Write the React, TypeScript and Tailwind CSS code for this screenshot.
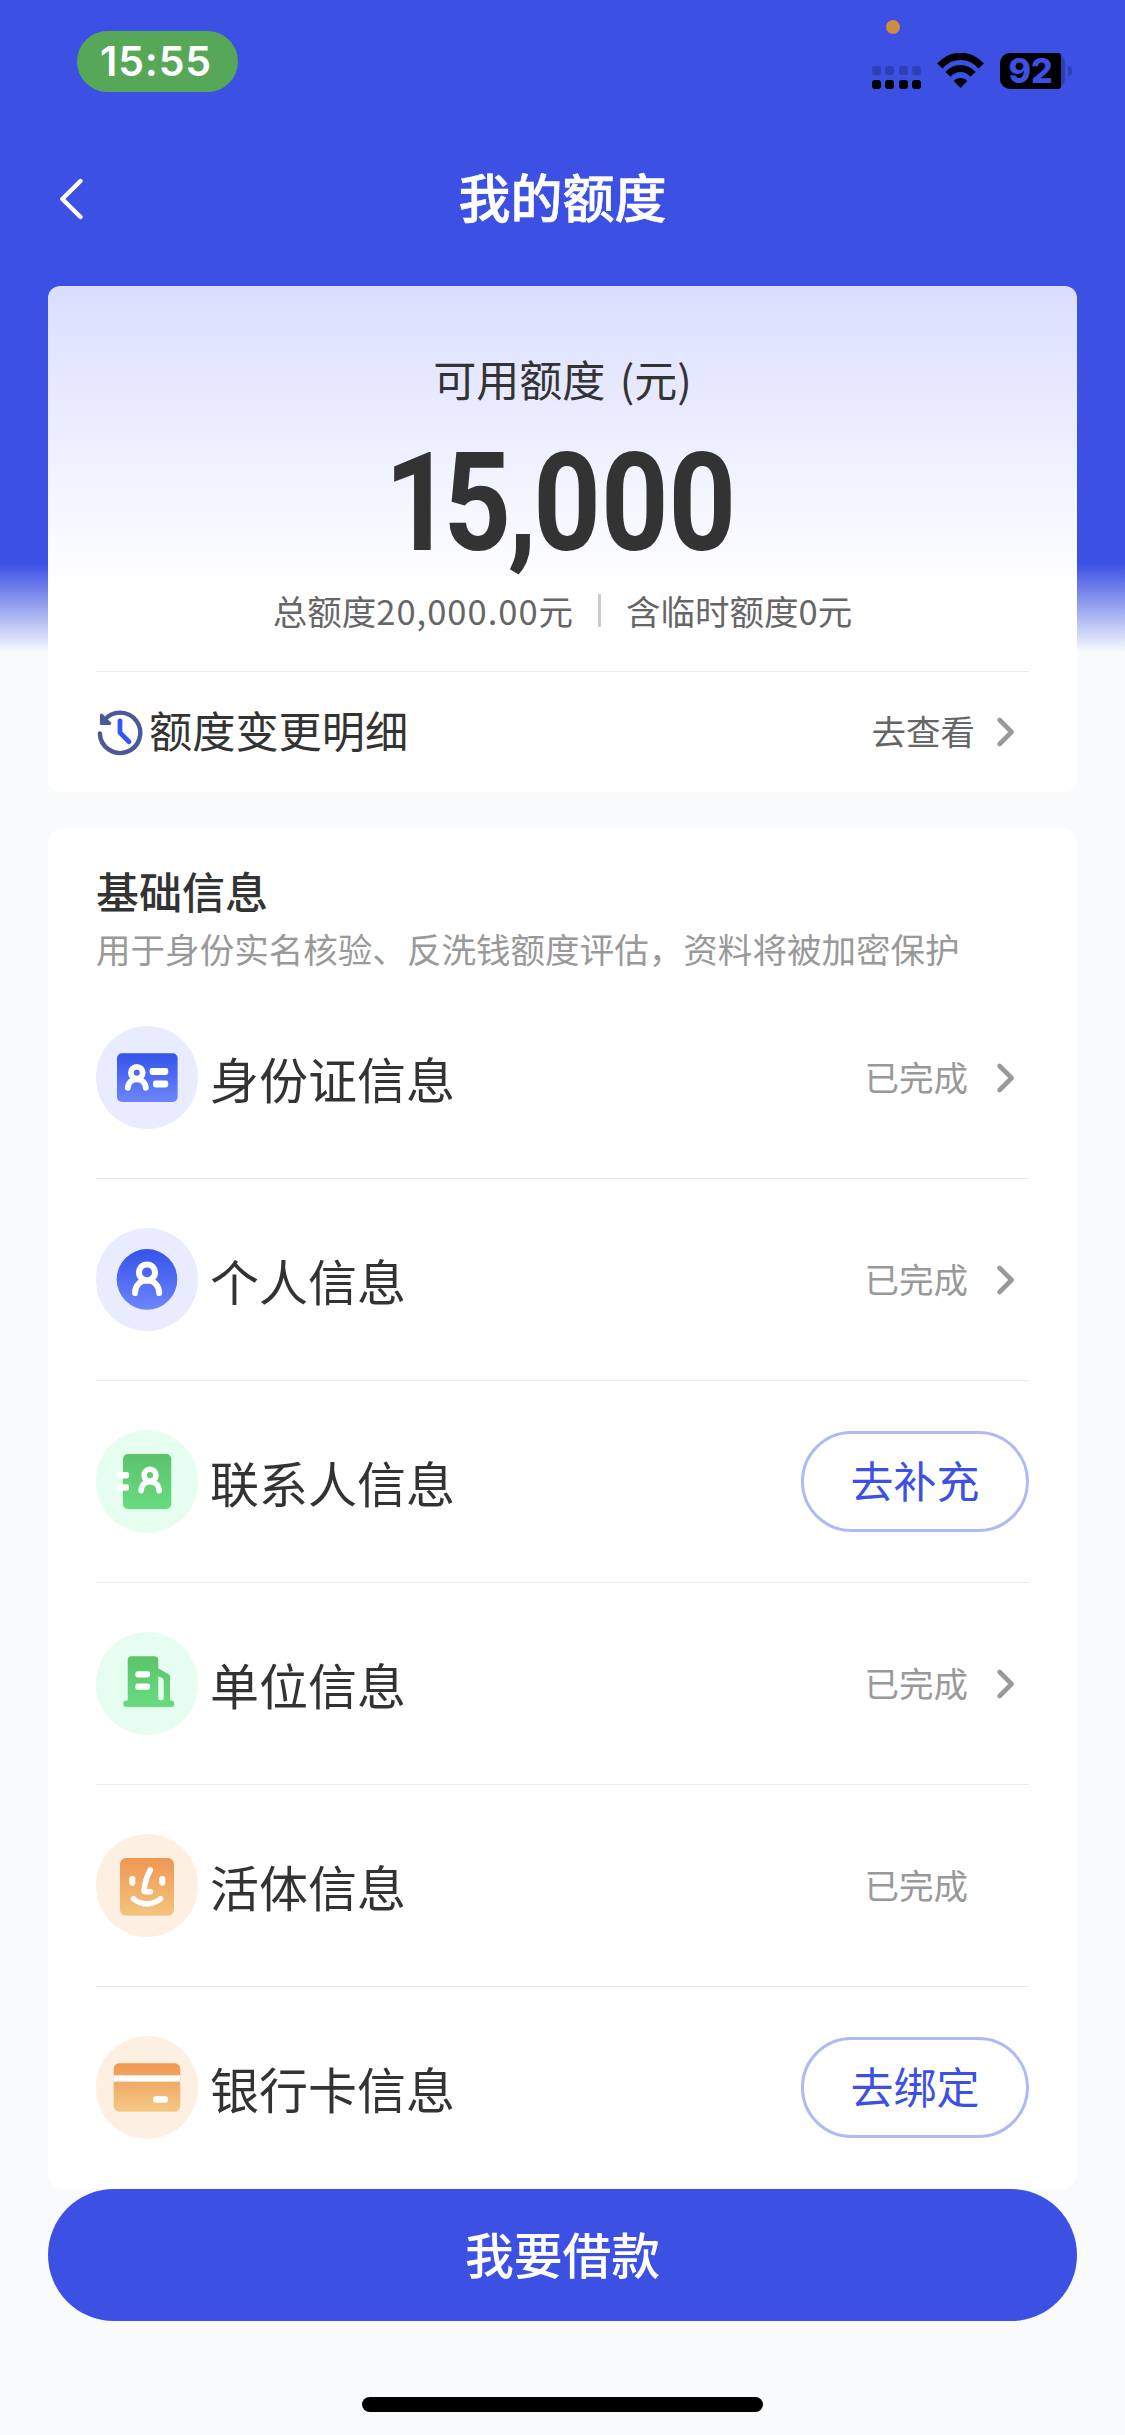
import React from 'react';

type RowAction = 'link' | 'none' | 'button';

interface InfoRow {
  label: string;
  status: string;
  action: RowAction;
  icon: React.FC;
}

const Gradient: React.FC<{ id: string; from: string; to: string }> = ({ id, from, to }) => (
  <linearGradient id={id} x1="0" y1="0" x2="0" y2="1">
    <stop offset="0" stopColor={from} />
    <stop offset="1" stopColor={to} />
  </linearGradient>
);

const IdCardIcon: React.FC = () => (
  <svg viewBox="0 0 102 103" className="size-full" fill="none">
    <defs>
      <Gradient id="idFill" from="#3453ea" to="#6e85fa" />
    </defs>
    <rect x="21" y="27.3" width="60.6" height="48.7" rx="5" fill="url(#idFill)" />
    <g stroke="#fff" strokeWidth="5.8" strokeLinecap="round">
      <circle cx="40.8" cy="46.8" r="5.9" />
      <path d="M31.8 61.8C32.2 56.5 35.8 53.4 40.8 53.4S49.4 56.5 49.8 61.8" />
    </g>
    <rect x="53.6" y="42.1" width="18.6" height="6.8" rx="2.4" fill="#fff" />
    <rect x="57" y="54.6" width="15.2" height="6.8" rx="2.4" fill="#fff" />
  </svg>
);

const PersonIcon: React.FC = () => (
  <svg viewBox="0 0 102 103" className="size-full" fill="none">
    <defs>
      <Gradient id="personFill" from="#3453ea" to="#6e85fa" />
    </defs>
    <circle cx="51" cy="51.4" r="30.3" fill="url(#personFill)" />
    <g stroke="#fff" strokeWidth="6" strokeLinecap="round">
      <circle cx="51" cy="44.4" r="8" />
      <path d="M39 65C39.4 57.2 44 52.6 51 52.6S62.8 57.2 63.2 65" />
    </g>
  </svg>
);

const ContactIcon: React.FC = () => (
  <svg viewBox="0 0 102 103" className="size-full" fill="none">
    <defs>
      <Gradient id="contactFill" from="#5bc36b" to="#67db80" />
    </defs>
    <rect x="27" y="24" width="48.3" height="55" rx="5" fill="url(#contactFill)" />
    <rect x="21" y="42" width="12" height="6.4" rx="2.2" fill="#fff" />
    <rect x="21" y="54.3" width="12" height="6.4" rx="2.2" fill="#fff" />
    <g stroke="#fff" strokeWidth="5.6" strokeLinecap="round">
      <circle cx="54" cy="45.2" r="5.9" />
      <path d="M45 60.8C45.4 55 49 51.8 54 51.8S62.8 55 63.2 60.8" />
    </g>
  </svg>
);

const BuildingIcon: React.FC = () => (
  <svg viewBox="0 0 102 103" className="size-full" fill="none">
    <defs>
      <Gradient id="buildingFill" from="#5bc36b" to="#67db80" />
    </defs>
    <path
      d="M31.7 28.3a4 4 0 0 1 4-4h22.6a4 4 0 0 1 4 4v8.3l10 5.4a3 3 0 0 1 1.7 2.6v23.9h1.1a3.2 3.2 0 0 1 0 6.4H30.5a3.2 3.2 0 0 1 0-6.4h1.2z"
      fill="url(#buildingFill)"
    />
    <path d="M62.3 44.4l3.8 1.7a2.6 2.6 0 0 1 1.6 2.4v17.8a2 2 0 0 1-2 2h-1.4a2 2 0 0 1-2-2z" fill="#e9fff1" />
    <rect x="39.3" y="39.3" width="14.8" height="6.2" rx="2.4" fill="#fff" />
    <rect x="39.3" y="51.6" width="14.8" height="6.2" rx="2.4" fill="#fff" />
  </svg>
);

const FaceIcon: React.FC = () => (
  <svg viewBox="0 0 102 103" className="size-full" fill="none">
    <defs>
      <Gradient id="faceFill" from="#ee9752" to="#f3c47e" />
    </defs>
    <rect x="24" y="24" width="54" height="57.8" rx="6" fill="url(#faceFill)" />
    <rect x="33.3" y="42" width="6" height="9.8" rx="2.8" fill="#fff" />
    <rect x="63.3" y="42" width="6" height="9.8" rx="2.8" fill="#fff" />
    <g stroke="#fff" strokeWidth="5.6" strokeLinecap="round" strokeLinejoin="round">
      <path d="M54.3 36C50.6 42.5 48.9 49 48 56.2q0 1.6 1.6 1.6h4.8" />
      <path d="M37.5 64.8C45 71.6 57 71.6 64.5 64.8" />
    </g>
  </svg>
);

const BankCardIcon: React.FC = () => (
  <svg viewBox="0 0 102 103" className="size-full" fill="none">
    <defs>
      <Gradient id="bankFill" from="#ee9752" to="#f5c985" />
    </defs>
    <rect x="17.7" y="27.3" width="66.6" height="48.4" rx="5.5" fill="url(#bankFill)" />
    <rect x="17.7" y="39.3" width="66.6" height="6.3" fill="#fff" />
    <rect x="57" y="60.2" width="15" height="6.6" rx="2.4" fill="#fff" />
  </svg>
);

const HistoryIcon: React.FC = () => (
  <svg viewBox="0 0 48 48" className="size-12 overflow-visible" fill="none" strokeLinecap="round" strokeLinejoin="round">
    <path d="M8 12.6A20.2 20.2 0 1 1 3.9 25.4" stroke="#4b5997" strokeWidth="4.4" />
    <path d="M5.6 7.4v8h8z" fill="#4b5997" stroke="#4b5997" strokeWidth="3.4" />
    <path d="M24 12.8v11.8l9 9.2" stroke="#3455f5" strokeWidth="4.8" />
  </svg>
);

const Chevron: React.FC = () => (
  <svg viewBox="0 0 20 32" className="h-8 w-5" fill="none">
    <path d="M3.6 4L15.6 16L3.6 28" stroke="#999" strokeWidth="4.6" strokeLinecap="round" strokeLinejoin="round" />
  </svg>
);

const rows: (InfoRow & { tint: string })[] = [
  { label: '身份证信息', status: '已完成', action: 'link', icon: IdCardIcon, tint: 'bg-[#e9ecfe]' },
  { label: '个人信息', status: '已完成', action: 'link', icon: PersonIcon, tint: 'bg-[#e9ecfe]' },
  { label: '联系人信息', status: '去补充', action: 'button', icon: ContactIcon, tint: 'bg-[#e6fef0]' },
  { label: '单位信息', status: '已完成', action: 'link', icon: BuildingIcon, tint: 'bg-[#e6fef0]' },
  { label: '活体信息', status: '已完成', action: 'none', icon: FaceIcon, tint: 'bg-[#fdf0e3]' },
  { label: '银行卡信息', status: '去绑定', action: 'button', icon: BankCardIcon, tint: 'bg-[#fdf0e3]' },
];

const StatusBar: React.FC = () => (
  <div className="flex h-[112px] items-start justify-between pl-[77px] pr-[53px]">
    <div className="mt-[31px] flex h-[61px] w-[161px] items-center justify-center rounded-full bg-[#57a759] pr-[3px] font-[Inter] text-[41px] font-semibold leading-none tracking-[0.8px] text-white">
      15:55
    </div>
    <div className="relative mt-[53px] flex h-9 items-start">
      {/* microphone-in-use dot */}
      <span className="absolute left-3.5 top-[-33px] size-3.5 rounded-full bg-[#cd8d43]"></span>
      <div className="mt-[13px] grid grid-cols-4 gap-x-[4.5px] gap-y-[5px]">
        {[0, 1, 2, 3, 4, 5, 6, 7].map((dot) => (
          <span key={dot} className={`h-[9px] w-[9px] rounded-[3px] ${dot < 4 ? 'bg-[#2f40b4]' : 'bg-black'}`}></span>
        ))}
      </div>
      <svg viewBox="0 0 47 36" className="ml-4 h-9 w-[47px]" fill="none">
        <path d="M2.8 13C14.5 0.2 32.5 0.2 44.2 13" stroke="#000" strokeWidth="7.4" />
        <path d="M11 21.4C18 13.6 29 13.6 36 21.4" stroke="#000" strokeWidth="7" />
        <path d="M23.5 35L16.8 27.9C20.4 24.1 26.6 24.1 30.2 27.9z" fill="#000" />
      </svg>
      <div className="ml-4 flex items-center">
        <div className="flex h-9 w-[65px] rounded-[10px] bg-[#2f40b4]">
          <div className="flex h-9 w-[61px] items-center justify-center rounded-l-[10px] rounded-r-[3px] bg-black font-[Inter] text-[34px] font-extrabold leading-9 text-[#3c50e3]">
            92
          </div>
        </div>
        <span className="ml-[3px] h-2.5 w-1 rounded-r-full bg-[#2f40b4]"></span>
      </div>
    </div>
  </div>
);

const NavBar: React.FC = () => (
  <div className="grid h-[174px] grid-cols-3 items-start px-[56px] pt-[61px] text-white">
    <svg viewBox="0 0 30 52" className="h-[52px] w-[30px]" fill="none">
      <path d="M24.5 8L6.3 26L24.5 44" stroke="#fff" strokeWidth="4.4" strokeLinecap="round" strokeLinejoin="round" />
    </svg>
    <h1 className="-mt-[3px] whitespace-nowrap text-center text-[52px] font-medium leading-[52px] [-webkit-text-stroke:0.6px_#fff]">
      我的额度
    </h1>
  </div>
);

const QuotaCard: React.FC = () => (
  <section className="flex h-[506px] flex-col rounded-xl bg-white bg-linear-to-b from-[#dadefe] to-white to-60% px-12">
    <div className="flex h-[386px] flex-col items-center border-b-[1.5px] border-[#ebebeb]">
      <p className="mt-[68px] text-[43px] leading-[48px] text-[#333] [word-spacing:5px]">可用额度 (元)</p>
      <p className="mr-1 mt-[41px] origin-center scale-x-[0.86] font-[Roboto] text-[137px] font-bold leading-[120px] text-[#333]">
        <span className="tracking-[-10px]">1</span>
        <span className="tracking-[-4px]">5,</span>000
      </p>
      <div className="mt-[25px] flex items-center text-[34.5px] leading-[44px] text-[#666]">
        <span>
          总额度<span className="tracking-[1px]">20,000.00</span>元
        </span>
        <span className="mx-[25px] h-[33px] w-[3px] bg-[#ccc]"></span>
        <span>含临时额度0元</span>
      </div>
    </div>
    <div className="flex h-[120px] items-center">
      <HistoryIcon />
      <span className="mb-1 ml-[5px] text-[43.2px] leading-none text-[#333]">额度变更明细</span>
      <span className="mb-[3px] ml-auto text-[34.5px] leading-none text-[#666]">去查看</span>
      <span className="ml-[21px] mr-[13px]"><Chevron /></span>
    </div>
  </section>
);

const InfoCard: React.FC = () => (
  <section className="mt-9 h-[1361px] rounded-2xl bg-white px-12 pt-[37px]">
    <h2 className="text-[43px] font-medium leading-[50px] text-[#333]">基础信息</h2>
    <p className="mt-[9px] h-[53px] whitespace-nowrap text-[34.55px] leading-[48px] text-[#999]">
      用于身份实名核验、反洗钱额度评估，资料将被加密保护
    </p>
    <ul>
      {rows.map(({ label, status, action, icon: Icon, tint }) => (
        <li key={label} className="flex h-[202px] items-center border-b-[1.5px] border-[#ebebeb] last:border-transparent">
          <span className={`h-[103px] w-[102px] shrink-0 rounded-full ${tint}`}>
            <Icon />
          </span>
          <span className="mb-px ml-3 text-[49px] leading-none text-[#333]">{label}</span>
          {action === 'button' ? (
            <button className="ml-auto flex h-[101px] w-[228px] items-center justify-center rounded-full border-3 border-[#afb9f6] pb-[5px] text-[43px] leading-none text-[#3c50e3]">
              {status}
            </button>
          ) : (
            <>
              <span className="mb-[3px] ml-auto text-[34.5px] leading-none text-[#999]">{status}</span>
              <span className="ml-[28px] mr-[13px] h-8 w-5">{action === 'link' && <Chevron />}</span>
            </>
          )}
        </li>
      ))}
    </ul>
  </section>
);

const App: React.FC = () => (
  <div className="h-[2435px] w-[1125px] overflow-hidden bg-[#f8fafc] bg-[linear-gradient(to_bottom,#3c50e3_0,#3c50e3_564px,#f8fafc_652px)] font-['Noto_Sans_CJK_SC',sans-serif]">
    <StatusBar />
    <NavBar />
    <main className="px-12">
      <QuotaCard />
      <InfoCard />
      <button className="flex h-[132px] w-full items-center justify-center rounded-full bg-[#3c50e3] pb-[3px] text-[48.8px] font-medium leading-none text-white">
        我要借款
      </button>
    </main>
    <div className="mx-auto mt-[76px] h-[15px] w-[401px] rounded-full bg-black"></div>
  </div>
);

export default App;
